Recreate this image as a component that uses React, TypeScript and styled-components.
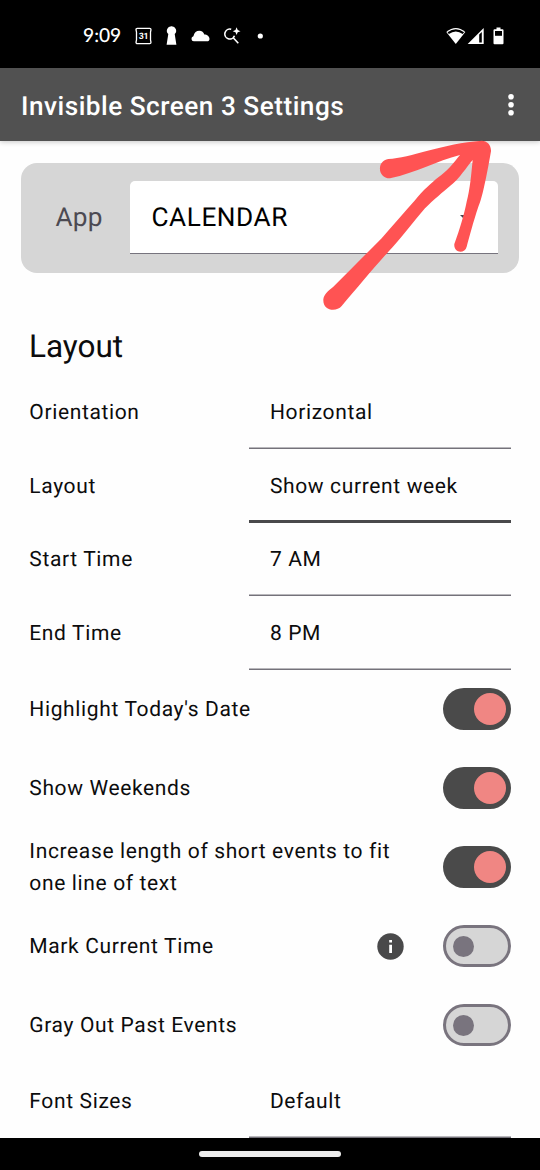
import React from "react";
import styled, { createGlobalStyle } from "styled-components";

const GlobalStyle = createGlobalStyle`
  * { box-sizing: border-box; }
  html, body { margin: 0; padding: 0; background: #fefefe; overflow: hidden; }
  body {
    font-family: Roboto, "Liberation Sans", sans-serif;
    color: #0c0c0d;
    text-rendering: geometricPrecision;
  }
`;

const Screen = styled.div`
  position: relative;
  width: 540px;
  height: 1170px;
  display: flex;
  flex-direction: column;
  background: #fefefe;
  overflow: hidden;
`;

const StatusBar = styled.header`
  flex: none;
  height: 68px;
  padding: 3px 36.5px 0 83px;
  display: flex;
  align-items: center;
  justify-content: space-between;
  background: #000;
  color: #fff;
`;

const StatusGroup = styled.div<{ $gap: number }>`
  display: flex;
  align-items: center;
  gap: ${(p) => p.$gap}px;
  svg { display: block; }
`;

const Clock = styled.span`
  width: 42px;
  margin-right: 9.5px;
  font: 500 19.2px/24px Lato, sans-serif;
  white-space: nowrap;
`;

const Toolbar = styled.div`
  flex: none;
  height: 73.4px;
  padding: 1px 21px 0;
  display: flex;
  align-items: center;
  justify-content: space-between;
  background: #515151;
  box-shadow: 0 1px 5px rgba(0, 0, 0, 0.22);
`;

const Title = styled.h1`
  margin: 0;
  padding-top: 3.6px;
  color: #fff;
  font-size: 26.2px;
  font-weight: 500;
  line-height: 34px;
  letter-spacing: 0.5px;
`;

const MenuButton = styled.button`
  width: 24px;
  height: 36px;
  margin-right: -4px;
  padding: 0;
  border: 0;
  background: none;
  svg { display: block; }
`;

const Content = styled.main`
  flex: 1;
  min-height: 0;
  padding: 21.3px 21px 0;
  overflow: hidden;
`;

const AppCard = styled.section`
  height: 110px;
  padding: 0 21.5px 0 34.5px;
  display: flex;
  align-items: center;
  background: #d6d6d6;
  border-radius: 16px;
`;

const AppLabel = styled.span`
  width: 74.5px;
  padding-top: 0.6px;
  color: #4c4a52;
  font-size: 26.2px;
  letter-spacing: 0.2px;
`;

const AppSelect = styled.div`
  flex: 1;
  height: 73.5px;
  padding: 1px 21.5px 0;
  display: flex;
  align-items: center;
  justify-content: space-between;
  background: #fff;
  color: #000;
  border-bottom: 1.5px solid #77747e;
  border-radius: 5px 5px 0 0;
  font-size: 26.2px;
  letter-spacing: 0.55px;
`;

const Caret = styled.i`
  margin: 1px 4px 0 0;
  border: 6px solid transparent;
  border-top-color: #49454f;
  border-bottom: 0;
`;

const Heading = styled.h2`
  margin: 53px 8px 0;
  height: 49.9px;
  font-size: 31.5px;
  font-weight: 400;
  line-height: 42px;
`;

const Row = styled.div<{ $height: number }>`
  height: ${(p) => p.$height}px;
  padding: 0 8px 0 8.3px;
  display: flex;
  align-items: center;
  font-size: 21px;
  line-height: 31.5px;
  letter-spacing: 0.64px;
`;

const RowLabel = styled.span`
  flex: 1;
  padding-top: 3.4px;
  white-space: pre-line;
`;

const Select = styled.div<{ $focused?: boolean }>`
  width: 262.4px;
  height: 100%;
  padding: 3.4px 0 0 21.3px;
  display: flex;
  align-items: center;
  box-shadow: inset 0 ${(p) => (p.$focused ? "-3px #49494b" : "-1.5px #74727a")};
`;

const InfoIcon = styled.svg`
  display: block;
  margin: 0 38.5px 0 0;
`;

const Switch = styled.span<{ $on: boolean }>`
  width: 68.3px;
  height: 42px;
  padding: ${(p) => (p.$on ? "0 5.3px" : "0 7.5px")};
  display: flex;
  align-items: center;
  justify-content: ${(p) => (p.$on ? "flex-end" : "flex-start")};
  background: ${(p) => (p.$on ? "#4a4a4a" : "#d6d6d6")};
  border: ${(p) => (p.$on ? "0" : "3px solid #79747e")};
  border-radius: 21px;
  &::after {
    content: "";
    width: ${(p) => (p.$on ? 32 : 21)}px;
    height: ${(p) => (p.$on ? 32 : 21)}px;
    border-radius: 50%;
    background: ${(p) => (p.$on ? "#f08683" : "#79747e")};
  }
`;

const NavBar = styled.footer`
  flex: none;
  height: 32px;
  display: flex;
  align-items: center;
  justify-content: center;
  background: #000;
`;

const HomeHandle = styled.div`
  width: 142px;
  height: 6px;
  border-radius: 3px;
  background: #ececec;
`;

const Arrow = styled.svg`
  position: absolute;
  left: 310px;
  top: 70px;
  pointer-events: none;
`;

type Setting =
  | { kind: "select"; label: string; value: string; focused?: boolean }
  | { kind: "switch"; label: string; on: boolean; info?: boolean };

const settings: Setting[] = [
  { kind: "select", label: "Orientation", value: "Horizontal" },
  { kind: "select", label: "Layout", value: "Show current week", focused: true },
  { kind: "select", label: "Start Time", value: "7 AM" },
  { kind: "select", label: "End Time", value: "8 PM" },
  { kind: "switch", label: "Highlight Today's Date", on: true },
  { kind: "switch", label: "Show Weekends", on: true },
  { kind: "switch", label: "Increase length of short events to fit\none line of text", on: true },
  { kind: "switch", label: "Mark Current Time", on: false, info: true },
  { kind: "switch", label: "Gray Out Past Events", on: false },
  { kind: "select", label: "Font Sizes", value: "Default" },
];

const CalendarIcon = () => (
  <svg width="17" height="18" viewBox="0 0 17 18">
    <path d="M2.300 1.400h12.400q1.300 0 1.300 1.300l-.5 2.300v8l.5 2.300q0 1.300-1.300 1.300H2.300q-1.300 0-1.300-1.300l.5-2.300V5L1 2.700q0-1.300 1.300-1.300z" fill="none" stroke="#fff" strokeWidth="1.300" />
    <text x="8.400" y="12.300" textAnchor="middle" fontFamily="Roboto, sans-serif" fontWeight="700" fontSize="8.800" letterSpacing="-0.3" fill="#fff">31</text>
  </svg>
);

const KeyholeIcon = () => (
  <svg width="11" height="19" viewBox="0 0 11 19">
    <path d="M5.500.3a4.500 4.500 0 0 1 3.200 7.800L10.400 18.700H.6L2.300 8.100a4.500 4.500 0 0 1 3.200-7.800z" fill="#fff" />
  </svg>
);

const CloudIcon = () => (
  <svg width="19" height="12" viewBox="0 0 19 12">
    <path d="M2.800 11.300A2.600 2.600 0 0 1 2.400 6.200C3.300 2.500 5.400.8 8.300.8c2.500 0 4.400 1.500 5 3.700 2.900 0 5.200 1.900 5.200 4.400 0 1.500-1 2.400-2.500 2.400z" fill="#fff" />
  </svg>
);

const SearchSparkIcon = () => (
  <svg width="17" height="18" viewBox="0 0 17 18">
    <path d="M7.200 2.200A5 5 0 1 0 10.500 8.800M9.200 10.800l5.100 5.400" fill="none" stroke="#fff" strokeWidth="1.600" />
    <path d="M12.600.3l1.100 2.800 2.800 1.100-2.800 1.100-1.100 2.800-1.100-2.800-2.800-1.100 2.800-1.100z" fill="#fff" />
  </svg>
);

const WifiIcon = () => (
  <svg width="20" height="18" viewBox="0 0 20 18">
    <path d="M.3 4.900Q9.800-3.100 19.300 4.900L9.800 17z" fill="#fff" />
    <path d="M2.200 6.200Q9.800.6 17.400 6.200" fill="none" stroke="#000" strokeWidth="2.200" />
  </svg>
);

const SignalIcon = () => (
  <svg width="17" height="18" viewBox="0 0 17 18">
    <path d="M16.700.9V17H.7z" fill="#fff" />
    <path d="M12.200 7.600l2.600-2.700v10.500h-2.600z" fill="#000" />
  </svg>
);

const BatteryIcon = () => (
  <svg width="11" height="18" viewBox="0 0 11 18">
    <path d="M3.500.5h4v1.700h2q1 0 1 1V16.300q0 1-1 1h-8q-1 0-1-1V3.200q0-1 1-1h2z" fill="#fff" />
    <path d="M2 4h7v4.800H2z" fill="#000" />
  </svg>
);

export default function App() {
  return (
    <>
      <GlobalStyle />
      <Screen>
        <StatusBar>
          <StatusGroup $gap={0}>
            <Clock>9:09</Clock>
            <StatusGroup $gap={14}>
              <CalendarIcon />
              <KeyholeIcon />
              <CloudIcon />
              <SearchSparkIcon />
              <svg width="20" height="6" viewBox="0 0 20 6"><circle cx="5.300" cy="3" r="2.600" fill="#fff" /></svg>
            </StatusGroup>
          </StatusGroup>
          <StatusGroup $gap={0}>
            <WifiIcon />
            <svg width="1" height="1" />
            <SignalIcon />
            <svg width="9" height="1" />
            <BatteryIcon />
          </StatusGroup>
        </StatusBar>
        <Toolbar>
          <Title>Invisible Screen 3 Settings</Title>
          <MenuButton aria-label="More options">
            <svg width="24" height="36" viewBox="0 0 24 36" fill="#fff">
              <circle cx="12" cy="9.700" r="2.800" />
              <circle cx="12" cy="17.700" r="2.800" />
              <circle cx="12" cy="25.700" r="2.800" />
            </svg>
          </MenuButton>
        </Toolbar>
        <Content>
          <AppCard>
            <AppLabel>App</AppLabel>
            <AppSelect>CALENDAR<Caret /></AppSelect>
          </AppCard>
          <Heading>Layout</Heading>
          {settings.map((s) => (
            <Row key={s.label} $height={s.kind === "select" ? 73.5 : 79}>
              <RowLabel>{s.label}</RowLabel>
              {s.kind === "select" ? (
                <Select $focused={s.focused}>{s.value}</Select>
              ) : (
                <>
                  {s.info && (
                    <InfoIcon width="27" height="27" viewBox="0 0 27 27">
                      <circle cx="13.500" cy="13.500" r="13.200" fill="#49494a" />
                      <path d="M12.200 7h2.800v2.600h-2.800zM12.200 11.800h2.800v8.200h-2.800z" fill="#fff" />
                    </InfoIcon>
                  )}
                  <Switch $on={s.on} />
                </>
              )}
            </Row>
          ))}
        </Content>
        <NavBar><HomeHandle /></NavBar>
        <Arrow width="230" height="250" viewBox="0 0 690 750">
          <path
            fill="#ff5353"
            d="M235 267C300 264 400 220 515 212C532 212 544 226 543 244C535 290 518 385 505 410C490 455 478 500 470 530C465 552 430 550 433 522C450 475 462 435 470 395C480 360 484 310 488 270C470 290 450 325 420 348C400 365 370 390 345 415C310 455 270 510 235 545C190 595 140 655 95 708C78 728 38 722 40 688C42 672 52 665 70 650C120 600 170 550 215 505C250 465 285 425 315 391C340 360 365 338 385 322C410 305 430 280 450 255C380 272 320 308 240 325C200 324 201 271 235 267Z"
          />
        </Arrow>
      </Screen>
    </>
  );
}
